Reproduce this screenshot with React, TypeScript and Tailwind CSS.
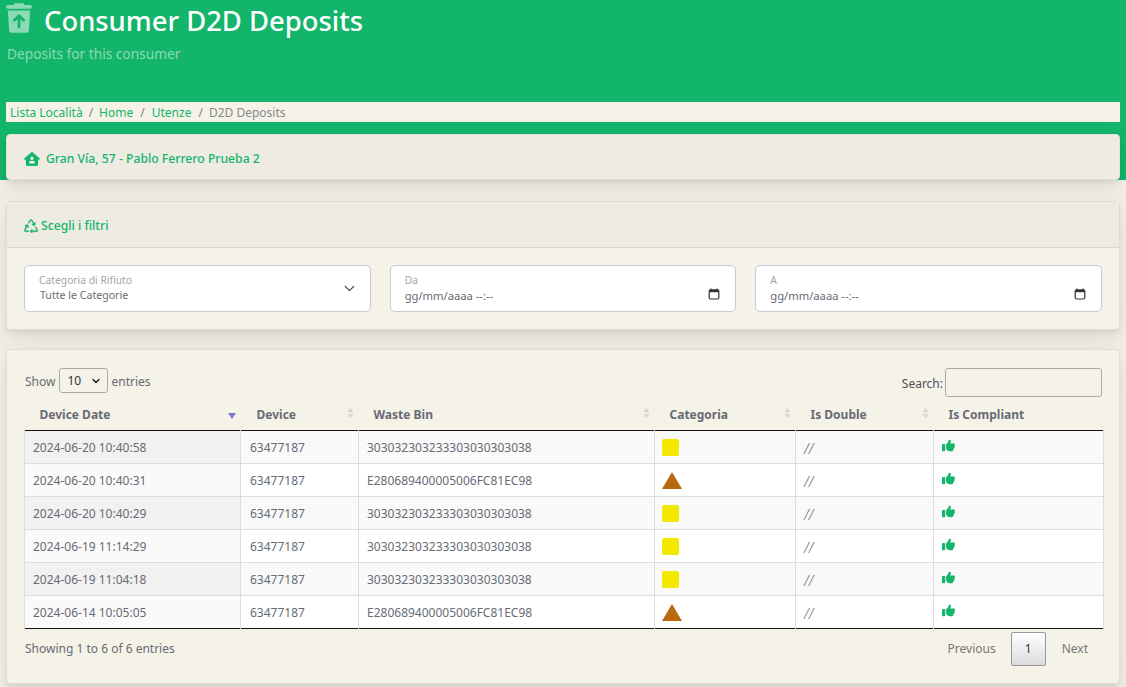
import { ChevronDown } from "lucide-react";
import { BsRecycle } from "react-icons/bs";
import { FaHouseUser, FaThumbsUp, FaTrashArrowUp } from "react-icons/fa6";

const rows = [
  { date: "2024-06-20 10:40:58", bin: "303032303233303030303038", kind: "square" },
  { date: "2024-06-20 10:40:31", bin: "E280689400005006FC81EC98", kind: "triangle" },
  { date: "2024-06-20 10:40:29", bin: "303032303233303030303038", kind: "square" },
  { date: "2024-06-19 11:14:29", bin: "303032303233303030303038", kind: "square" },
  { date: "2024-06-19 11:04:18", bin: "303032303233303030303038", kind: "square" },
  { date: "2024-06-14 10:05:05", bin: "E280689400005006FC81EC98", kind: "triangle" },
];

const columns = [
  { name: "Device Date", cls: "w-[216px] pl-[15px]" },
  { name: "Device", cls: "w-[118px] pl-[16px]" },
  { name: "Waste Bin", cls: "w-[296px] pl-[15px]" },
  { name: "Categoria", cls: "w-[141px] pl-[15px]" },
  { name: "Is Double", cls: "w-[138px] pl-[15px]" },
  { name: "Is Compliant", cls: "w-[170px] pl-[15px]" },
];

const cardShadow =
  "shadow-[0_7px_35px_rgba(4,9,20,0.03),0_15px_22px_rgba(4,9,20,0.03),0_4px_8px_rgba(4,9,20,0.05),0_2px_3px_rgba(4,9,20,0.03)]";

function SortArrows({ active }: { active?: boolean }) {
  if (active) {
    return (
      <svg viewBox="0 0 8 6" className="absolute right-[5px] top-[13px] h-[6px] w-[8px]">
        <path d="M0 0h8L4 6z" fill="#7b7bd6" />
      </svg>
    );
  }
  return (
    <svg viewBox="0 0 8 12" className="absolute right-[5px] top-[7px] h-[12px] w-[7px]">
      <path d="M4 0l3.5 5h-7zM4 12L.5 7h7z" fill="#d6d6d6" />
    </svg>
  );
}

function CalendarIcon() {
  return (
    <svg viewBox="0 0 12 12" className="h-[12px] w-[12px]" fill="none">
      <path d="M3 .5v2M9 .5v2" stroke="#333" strokeWidth="1.2" />
      <rect x="1.2" y="1.8" width="9.6" height="9.2" rx="1.2" stroke="#333" strokeWidth="1.2" />
      <rect x="1.2" y="2" width="9.6" height="2.2" fill="#333" />
    </svg>
  );
}

function DateField({ label }: { label: string }) {
  return (
    <div className="flex h-[47px] flex-1 items-center justify-between rounded-[5px] border border-[#c5cad6] bg-white pl-[14px] pr-[15px]">
      <div className="-mt-[1px] flex flex-col">
        <span className="text-[10.3px] leading-[15px] text-[#a5a5ab]">{label}</span>
        <span className="text-[11.2px] leading-[15px] text-[#676b74]">gg/mm/aaaa --:--</span>
      </div>
      <div className="mt-[10px]">
        <CalendarIcon />
      </div>
    </div>
  );
}

export default function App() {
  return (
    <div className="min-h-[687px] bg-[#f1eee3] font-['Noto_Sans','Open_Sans',sans-serif] text-[#676b74]">
      <header className="h-[180px] bg-[#13b56a] px-[6px]">
        <div className="flex h-[46px] items-start">
          <FaTrashArrowUp className="mt-[3px] h-[30px] w-[26px] text-white/50" />
          <h1 className="ml-[12px] mt-[2px] text-[27.4px] font-medium leading-[38px] text-white">Consumer D2D Deposits</h1>
        </div>
        <p className="pl-[1px] text-[13.7px] leading-[16px] text-white/50">Deposits for this consumer</p>
        <nav className="mt-[40px] flex h-[20px] items-center bg-[#f5f2e7] pl-[4px] pt-[2px] text-[12px]">
          <span className="text-[#13b56a]">Lista Località</span>
          <span className="mx-[6px] text-[#7b7f88]">/</span>
          <span className="text-[#13b56a]">Home</span>
          <span className="mx-[7px] text-[#7b7f88]">/</span>
          <span className="text-[#13b56a]">Utenze</span>
          <span className="ml-[7px] mr-[6px] text-[#7b7f88]">/</span>
          <span className="text-[#85888f]">D2D Deposits</span>
        </nav>
        <div className={`mt-[12px] flex h-[46px] items-center gap-[6px] rounded-[4px] border border-[#e2e0d6] bg-[#eeebe2] pl-[17px] pt-[5px] ${cardShadow}`}>
          <FaHouseUser className="-mt-[1px] h-[14px] w-[16px] text-[#13b56a]" />
          <span className="text-[12.2px] font-medium text-[#13b56a]">Gran Vía, 57 - Pablo Ferrero Prueba 2</span>
        </div>
      </header>

      <main className="flex flex-col gap-[19px] px-[6px] pt-[21px]">
        <section className={`relative rounded-[4px] border border-[#dfddd2] bg-[#f5f2e7] ${cardShadow}`}>
          <div className="flex h-[46px] items-center gap-[3px] border-b border-[#dad8ce] bg-[#eeebe2] pl-[17px] pt-[3px]">
            <BsRecycle className="h-[14px] w-[14px] text-[#13b56a]" stroke="currentColor" strokeWidth={0.6} />
            <span className="text-[12.2px] font-medium text-[#13b56a]">Scegli i filtri</span>
          </div>
          <div className="flex gap-[19px] p-[17px]">
            <div className="flex h-[47px] flex-1 items-center justify-between rounded-[5px] border border-[#c5cad6] bg-white pl-[14px] pr-[15px]">
              <div className="-mt-[1px] flex flex-col">
                <span className="text-[10.3px] leading-[15px] text-[#a5a5ab]">Categoria di Rifiuto</span>
                <span className="pl-[1px] text-[10.6px] leading-[15px] text-[#676b74]">Tutte le Categorie</span>
              </div>
              <ChevronDown className="-mr-[3px] h-[17px] w-[17px] text-[#444]" strokeWidth={1.8} />
            </div>
            <DateField label="Da" />
            <DateField label="A" />
          </div>
        </section>

        <section className={`relative rounded-[4px] border border-[#dfddd2] bg-[#f5f2e7] pb-[17px] pl-[17px] pr-[17px] pt-[18px] ${cardShadow}`}>
          <div className="flex items-start justify-between pl-[1px]">
            <div className="flex h-[25px] items-center text-[12px]">
              <span className="pt-[2px]">Show</span>
              <span className="ml-[4px] mr-[3px] flex h-[25px] w-[49px] items-center justify-between rounded-[3px] border border-[#aaa] pl-[7px] pr-[5px] text-[#333]">
                10
                <ChevronDown className="h-[12px] w-[12px] text-[#222]" strokeWidth={3} />
              </span>
              <span className="pt-[2px]">entries</span>
            </div>
            <div className="flex items-center gap-[2px] text-[12px]">
              <span className="pt-[2px] text-[#4d5058]">Search:</span>
              <span className="h-[29px] w-[157px] rounded-[3px] border border-[#aaa]" />
            </div>
          </div>

          <table className="mt-[3px] w-[1079px] table-fixed border-collapse text-[12px]">
            <thead>
              <tr className="h-[30px] border-b border-[#111]">
                {columns.map((col, i) => (
                  <th key={col.name} className={`relative text-left font-bold text-[#676b74] ${col.cls}`}>
                    {col.name}
                    {i < 5 && <SortArrows active={i === 0} />}
                  </th>
                ))}
              </tr>
            </thead>
            <tbody>
              {rows.map((row, i) => (
                <tr key={row.date} className={`h-[33px] border-b border-[#ddd] last:border-b-[#111] ${i % 2 === 0 ? "bg-[#f9f9f9]" : "bg-white"}`}>
                  <td className={`border-l border-[#ddd] pl-[8px] pt-[2px] ${i % 2 === 0 ? "bg-[#f1f1f1]" : "bg-[#fafafa]"}`}>{row.date}</td>
                  <td className="border-l border-[#ddd] pl-[9px] pt-[2px]">63477187</td>
                  <td className="border-l border-[#ddd] pl-[8px] pt-[2px]">{row.bin}</td>
                  <td className="border-l border-[#ddd] pl-[7px] pt-[1px]">
                    {row.kind === "square" ? (
                      <div className="h-[17px] w-[17px] rounded-[2px] bg-[#f2e800]" />
                    ) : (
                      <svg viewBox="0 0 20 17" className="h-[17px] w-[20px]">
                        <path d="M10 0l10 17H0z" fill="#b9680e" />
                      </svg>
                    )}
                  </td>
                  <td className="border-l border-[#ddd] pl-[8px] pt-[3px] text-[14px] font-light italic">//</td>
                  <td className="border-x border-[#ddd] pl-[8px]">
                    <FaThumbsUp className="mb-[3px] h-[13px] w-[13px] text-[#13b56a]" />
                  </td>
                </tr>
              ))}
            </tbody>
          </table>

          <div className="mt-[3px] flex w-[1080px] items-center justify-between pl-[1px] text-[12px]">
            <span>Showing 1 to 6 of 6 entries</span>
            <div className="flex items-center">
              <span className="pl-[16px] pr-[15px] text-[#777]">Previous</span>
              <span className="flex h-[34px] w-[35px] items-center justify-center rounded-[2px] border border-[#979797] bg-gradient-to-b from-white to-[#dcdcdc] text-[#333]">1</span>
              <span className="px-[16px] text-[#777]">Next</span>
            </div>
          </div>
        </section>
      </main>
    </div>
  );
}
